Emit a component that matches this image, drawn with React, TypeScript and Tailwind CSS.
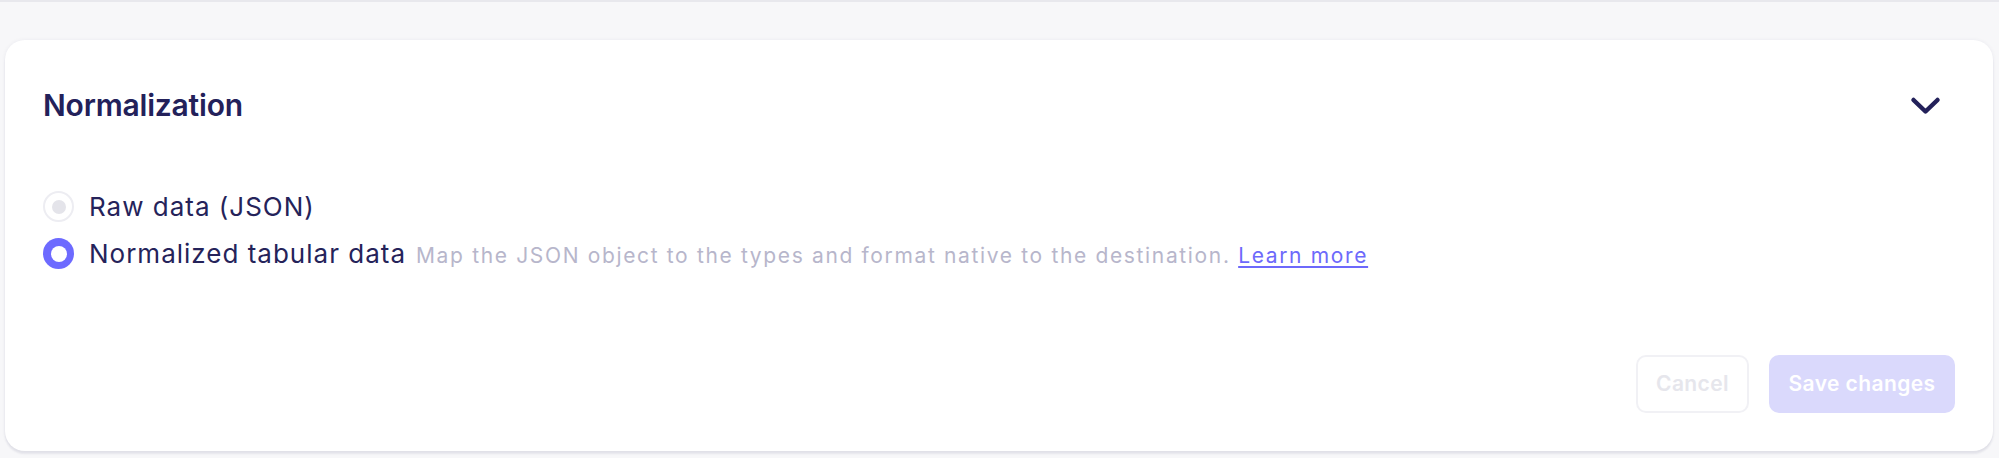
import React, { useState } from "react";

const font = { fontFamily: "Inter, 'Noto Sans', sans-serif" };

interface RadioRowProps {
  checked: boolean;
  disabled?: boolean;
  label: string;
  onSelect: () => void;
  children?: React.ReactNode;
}

function RadioRow({ checked, disabled, label, onSelect, children }: RadioRowProps) {
  return (
    <label
      className="flex h-[47px] items-center gap-[15px] cursor-pointer"
      onClick={() => !disabled && onSelect()}
    >
      {checked ? (
        <span className="flex h-[31px] w-[31px] shrink-0 items-center justify-center rounded-full bg-[#6d6aff]">
          <span className="h-[16px] w-[16px] rounded-full bg-white" />
        </span>
      ) : (
        <span className="flex h-[31px] w-[31px] shrink-0 items-center justify-center rounded-full border-2 border-[#ededf2] bg-white">
          <span className="h-[14px] w-[14px] rounded-full bg-[#e4e4ea]" />
        </span>
      )}
      <span className="flex items-baseline">
        <span className="text-[26px] leading-none tracking-[1px] text-[#25235a]">{label}</span>
        {children}
      </span>
    </label>
  );
}

export default function App() {
  const [mode, setMode] = useState<"raw" | "normalized">("normalized");

  return (
    <div
      style={font}
      className="min-h-screen border-t-2 border-[#e8e8ed] bg-[#f7f7f9] pl-[5px] pr-[6px] pt-[38px]"
    >
      <div className="rounded-[20px] bg-white px-[38px] pt-[46px] pb-[38px] shadow-[0_3px_2px_rgba(40,40,90,0.08),0_0_4px_rgba(40,40,90,0.06)]">
        {/* Header */}
        <div className="flex h-[39px] items-center justify-between">
          <h2 className="text-[30px] font-semibold leading-[39px] tracking-[-0.2px] text-[#23215a]">
            Normalization
          </h2>
          <button className="mr-[14px] flex h-[30px] w-[32px] items-center justify-center">
            <svg width="31" height="20" viewBox="0 0 31 20" fill="none">
              <polyline
                points="3.5,4 15.5,15.5 27.5,4"
                stroke="#23215a"
                strokeWidth="4.5"
                strokeLinecap="round"
                strokeLinejoin="round"
              />
            </svg>
          </button>
        </div>

        {/* Options */}
        <div className="mt-[58px] flex flex-col">
          <RadioRow
            checked={mode === "raw"}
            disabled
            label="Raw data (JSON)"
            onSelect={() => setMode("raw")}
          />
          <RadioRow
            checked={mode === "normalized"}
            label="Normalized tabular data"
            onSelect={() => setMode("normalized")}
          >
            <span className="ml-[10px] text-[21px] leading-none tracking-[1.65px] text-[#b7b6cb]">
              Map the JSON object to the types and format native to the destination.{" "}
              <a href="#" className="text-[#6d69fb] underline underline-offset-[3px]">
                Learn more
              </a>
            </span>
          </RadioRow>
        </div>

        {/* Footer */}
        <div className="mt-[78px] flex justify-end gap-[20px]">
          <button
            disabled
            className="h-[58px] w-[113px] rounded-[10px] border-2 border-[#f1f1f5] text-[21px] font-semibold tracking-[0.4px] text-[#e6e6ec]"
          >
            Cancel
          </button>
          <button
            disabled
            className="h-[58px] w-[186px] rounded-[10px] bg-[#dad9fc] text-[21px] font-semibold tracking-[0.4px] text-white"
          >
            Save changes
          </button>
        </div>
      </div>
    </div>
  );
}
